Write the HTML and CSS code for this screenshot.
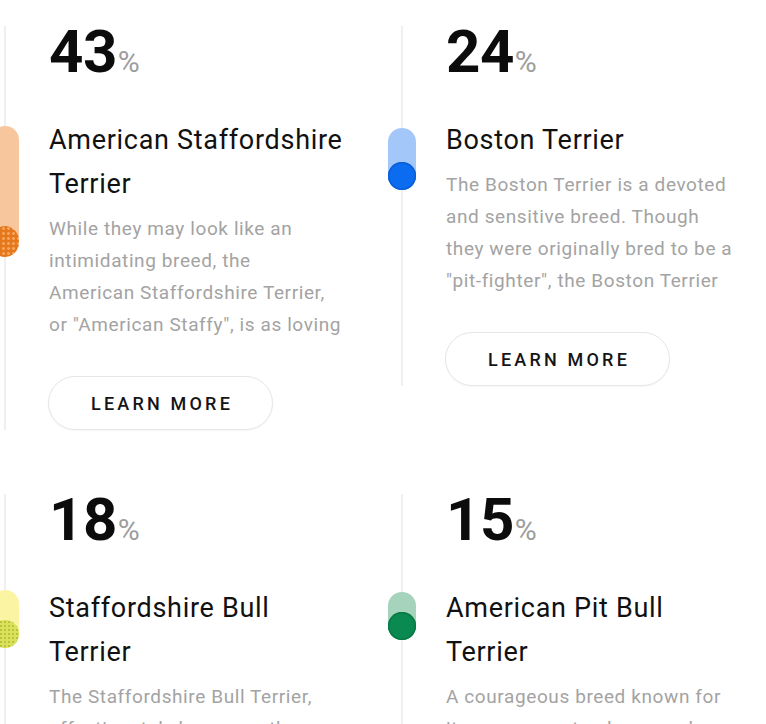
FILE: index.html
```html
<!DOCTYPE html>
<html lang="en">
<head>
<meta charset="utf-8">
<title>Breeds</title>
<link rel="stylesheet" href="styles.css">
</head>
<body>
<main class="grid">
  <article class="card">
    <span class="pill pill-orange" style="height:131px"><span class="dot"></span></span>
    <div class="stat">43<span class="pct">%</span></div>
    <h2 class="title">American Staffordshire Terrier</h2>
    <p class="desc">While they may look like an<br>intimidating breed, the<br>American Staffordshire Terrier,<br>or "American Staffy", is as loving</p>
    <button class="btn">LEARN MORE</button>
  </article>
  <article class="card">
    <span class="pill pill-blue" style="height:62px"><span class="dot"></span></span>
    <div class="stat">24<span class="pct">%</span></div>
    <h2 class="title">Boston Terrier</h2>
    <p class="desc">The Boston Terrier is a devoted<br>and sensitive breed. Though<br>they were originally bred to be a<br>"pit-fighter", the Boston Terrier</p>
    <button class="btn">LEARN MORE</button>
  </article>
  <article class="card">
    <span class="pill pill-yellow" style="height:58px"><span class="dot"></span></span>
    <div class="stat">18<span class="pct">%</span></div>
    <h2 class="title">Staffordshire Bull Terrier</h2>
    <p class="desc">The Staffordshire Bull Terrier,<br>affectionately known as the</p>
  </article>
  <article class="card">
    <span class="pill pill-green" style="height:48px"><span class="dot"></span></span>
    <div class="stat">15<span class="pct">%</span></div>
    <h2 class="title">American Pit Bull Terrier</h2>
    <p class="desc">A courageous breed known for<br>its eagerness to please and</p>
  </article>
</main>
</body>
</html>
```
FILE: styles.css
```css
* { box-sizing: border-box; }
html, body { margin: 0; padding: 0; background: #fff; overflow: hidden; }
body { font-family: Roboto, "Liberation Sans", Arial, sans-serif; color: #111; }

.grid {
  display: grid;
  grid-template-columns: 397px 1fr;
  row-gap: 64px;
  align-items: start;
  margin: 26px 0 0 4px;
}

.card {
  position: relative;
  border-left: 2px solid #efefef;
  padding-left: 43px;
  display: flex;
  flex-direction: column;
  align-items: flex-start;
}

.stat {
  font-size: 60px;
  line-height: 52px;
  height: 52px;
  font-weight: 700;
  color: #0c0c0c;
  letter-spacing: -0.5px;
}
.pct {
  font-size: 30px;
  line-height: 1;
  font-weight: 400;
  color: #9d9d9d;
  letter-spacing: 0;
  margin-left: 1px;
}

.title {
  margin: 40px 0 0;
  font-size: 27px;
  line-height: 44px;
  font-weight: 400;
  letter-spacing: 0.7px;
  color: #111;
  max-width: 300px;
}

.desc {
  margin: 7px 0 0;
  font-size: 19px;
  line-height: 32px;
  letter-spacing: 0.6px;
  color: #a3a3a3;
  white-space: nowrap;
}

.btn {
  margin-top: 35px;
  margin-left: -1px;
  width: 225px;
  height: 54px;
  border: 1px solid #e6e6e6;
  border-radius: 27px;
  background: #fff;
  box-shadow: 0 1px 2px rgba(0,0,0,0.04);
  font-family: Roboto, "Liberation Sans", Arial, sans-serif;
  font-size: 18px;
  font-weight: 500;
  letter-spacing: 3.2px;
  padding: 0 0 0 3px;
  color: #151515;
}

.pill {
  position: absolute;
  left: -15px;
  top: 100px;
  width: 28px;
  border-radius: 14px;
  display: flex;
  flex-direction: column;
  justify-content: flex-end;
}
.dot {
  width: 28px;
  height: 28px;
  border-radius: 50%;
}
.pill-orange { background: #f8c69c; }
.pill-orange .dot {
  background-color: #e5781c;
  background-image: radial-gradient(circle, #f6a65e 1.2px, transparent 1.6px);
  background-size: 5px 5px;
  height: 31px;
}
.pill-blue { background: #a4c7f9; top: 102px; }
.pill-blue .dot { background: #0b6cf0; box-shadow: inset 0 0 0 1.5px #0a5fd6; }
.pill-yellow { background: #fbf4a3; top: 96px; }
.pill-yellow .dot {
  background-color: #d9e25a;
  background-image: radial-gradient(circle, #b9c43a 1px, transparent 1.4px);
  background-size: 4px 4px;
}
.pill-green { background: #a5d3bb; top: 98px; }
.pill-green .dot { background: #0a8a50; box-shadow: inset 0 0 0 1.5px #087a46; }
```
